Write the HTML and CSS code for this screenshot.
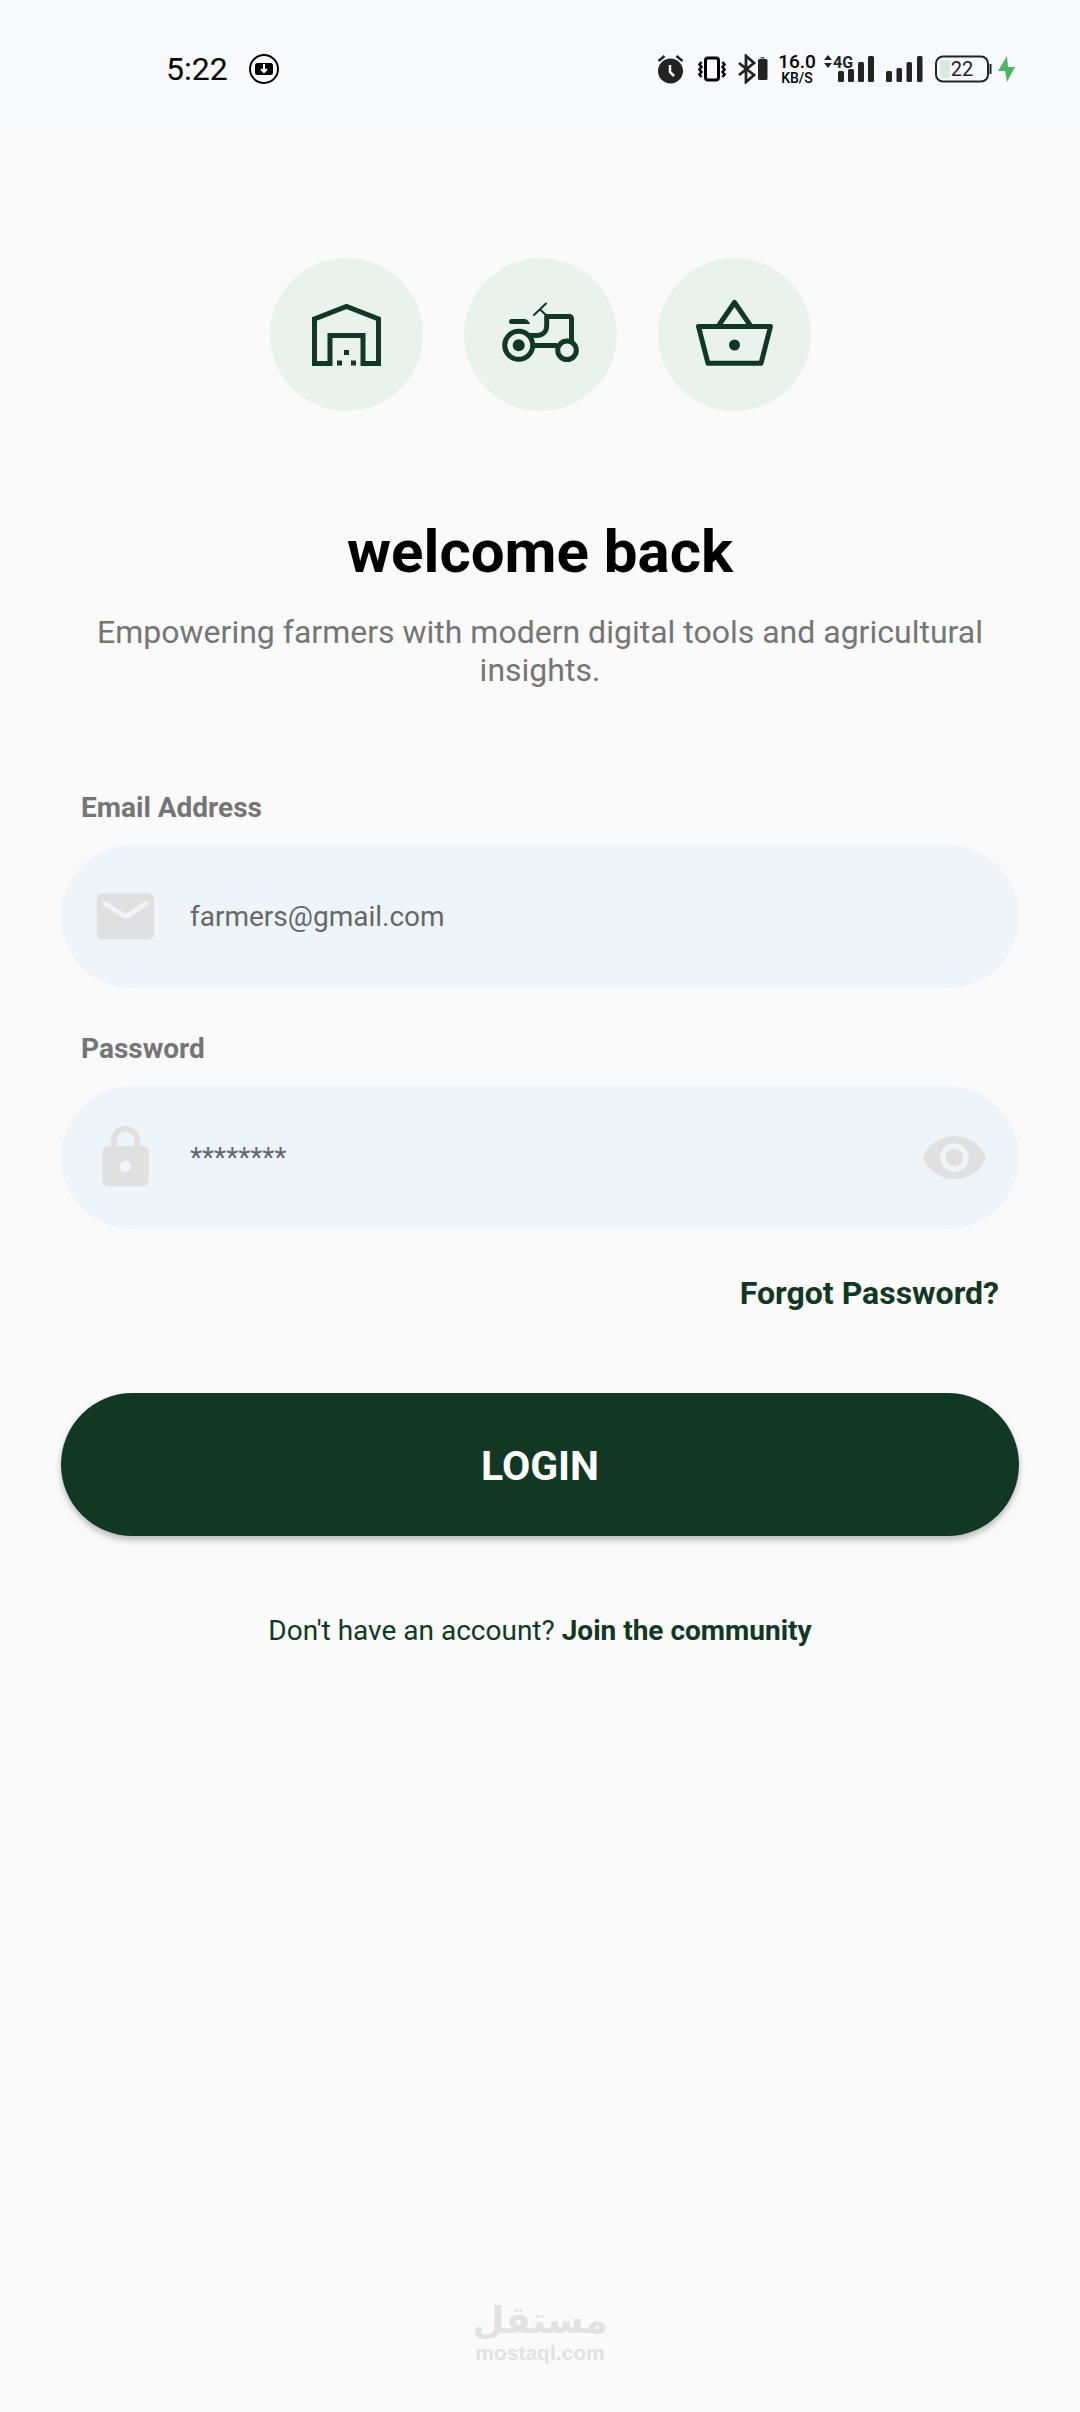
FILE: index.html
```html
<!DOCTYPE html>
<html lang="en">

<head>
  <title>Login</title>
  <meta charset="utf-8" />
  <meta name="viewport" content="width=device-width" />
  <link rel="stylesheet" href="styles.css">
</head>

<body>
  <!-- phone status bar -->
  <header class="status">
    <div class="status-left">
      <span class="clock">5:22</span>
      <svg width="30" height="30" viewBox="0 0 30 30">
        <circle cx="15" cy="15" r="14" fill="none" stroke="#000" stroke-width="2" />
        <rect x="6" y="9" width="18" height="12" rx="2.500" />
        <path d="M15 10v7M12 15l3 3 3-3" fill="none" stroke="#fff" stroke-width="2" />
      </svg>
    </div>
    <div class="status-right">
      <!-- alarm -->
      <svg width="27" height="30" viewBox="0 0 27 30" fill="#232323">
        <circle cx="13.500" cy="17" r="12.500" />
        <path d="M1.500 7l6-5M25.500 7l-6-5" stroke="#232323" stroke-width="2.500" />
        <path d="M13 11v7l4 4" fill="none" stroke="#f8f9fc" stroke-width="2.500" />
      </svg>
      <!-- vibrate -->
      <svg class="vibrate" width="28" height="30" viewBox="0 0 28 30" fill="none" stroke="#000">
        <rect x="7.500" y="4" width="13" height="22" rx="2.500" stroke-width="3" />
        <path d="M3.500 8l-2 2.500 2 2.500-2 2.500 2 2.500-2 2.500 2 2.500M24.500 8l2 2.500-2 2.500 2 2.500-2 2.500 2 2.500-2 2.500" stroke-width="2.500" />
      </svg>
      <!-- bluetooth -->
      <svg class="bluetooth" width="30" height="30" viewBox="0 0 30 30">
        <path d="M1 9l15 12-8 7V2l8 7L1 21" fill="none" stroke="#232323" stroke-width="2.800" />
        <path d="M22.500 3h4v1.500h-4z" fill="#555" />
        <rect x="20" y="5" width="9.500" height="21" rx="1.500" fill="#232323" />
      </svg>
      <div class="speed"><b>16.0</b><span>KB/S</span></div>
      <!-- sim 1 -->
      <svg class="sim" width="51" height="36" viewBox="0 -3 51 36" fill="#232323">
        <path d="M1 6l4-5 4 5zM1 9h8l-4 5z" />
        <text class="net" x="10" y="14">4G</text>
        <rect x="15" y="17" width="6" height="11" rx="1.500" />
        <rect x="25" y="15" width="6" height="13" rx="1.500" />
        <rect x="35" y="8" width="6" height="20" rx="1.500" />
        <rect x="45" y="2" width="6" height="26" rx="1.500" />
      </svg>
      <!-- sim 2 -->
      <svg class="bars" width="37" height="30" viewBox="0 0 37 30" fill="#232323">
        <rect x="0" y="17" width="6" height="11" rx="1.500" />
        <rect x="10.500" y="14" width="5.500" height="14" rx="1.500" />
        <rect x="20.500" y="8" width="5.500" height="20" rx="1.500" />
        <rect x="31" y="2" width="5.500" height="26" rx="1.500" />
      </svg>
      <svg class="battery" width="57" height="30" viewBox="0 0 57 30">
        <rect x="1" y="2.500" width="52" height="25" rx="7" fill="none" stroke="#232323" stroke-width="2" />
        <path d="M8 6h7v18H8a3 3 0 0 1-3-3V9a3 3 0 0 1 3-3z" fill="#d8e9dd" />
        <path d="M55.500 10v10" stroke="#232323" stroke-width="2" />
        <text class="level" x="27" y="22">22</text>
      </svg>
      <svg width="17" height="30" viewBox="0 0 17 30">
        <path d="M9 2L0 17h7l2 11 8-15h-7z" fill="#4db566" />
      </svg>
    </div>
  </header>

  <main class="content">
    <div class="badges">
      <svg class="badge" viewBox="0 0 153 153">
        <path d="M44.500 105.500V61l32-12.500 32 12.500v44.500H93v-28H60v28z" />
        <path class="solid" d="M74 92h5v5h-5zM67 102.500h5v5h-5zM81 102.500h5v5h-5z" />
      </svg>
      <svg class="badge" viewBox="0 0 153 153">
        <circle cx="54.700" cy="87.300" r="14" />
        <circle class="solid" cx="54.700" cy="87.300" r="6" />
        <circle cx="103" cy="92.300" r="9.300" />
        <path d="M107.500 83V60.500a2 2 0 0 0-2-2H82.700v9c0 6-4 10-10 10H66M69 87.500h24" />
        <path class="solid" d="M47.500 61H60c3 0 5 2 6 5H47.500a2.500 2.500 0 0 1 0-5z" />
        <path class="thin" d="M70 57l12-11.500M76 51.500l7 6.500" />
      </svg>
      <svg class="badge" viewBox="0 0 153 153">
        <path d="M40.500 68.500h72L103 105.300H50zM61 67l15.500-22.500L92 67" />
        <circle class="solid" cx="76.500" cy="87" r="5.500" />
      </svg>
    </div>

    <h1 class="title">welcome back</h1>
    <p class="subtitle">Empowering farmers with modern digital tools and agricultural insights.</p>

    <form class="form">
      <label class="label" for="email">Email Address</label>
      <div class="field">
        <svg class="icon" viewBox="0 0 24 24">
          <path d="M20 4H4c-1.100 0-2 .9-2 2v12c0 1.100.9 2 2 2h16c1.100 0 2-.9 2-2V6c0-1.100-.9-2-2-2zm-.4 4.250l-7.070 4.420c-.32.2-.74.2-1.060 0L4.400 8.250c-.25-.16-.4-.43-.4-.72 0-.67.73-1.070 1.300-.72L12 11l6.700-4.190c.57-.35 1.300.05 1.300.72 0 .29-.15.56-.4.72z" />
        </svg>
        <input class="input" type="email" id="email" placeholder="farmers@gmail.com">
      </div>

      <label class="label" for="password">Password</label>
      <div class="field">
        <svg class="icon" viewBox="0 0 24 24">
          <path d="M18 8h-1V6c0-2.760-2.240-5-5-5S7 3.240 7 6v2H6c-1.100 0-2 .9-2 2v10c0 1.100.9 2 2 2h12c1.100 0 2-.9 2-2V10c0-1.100-.9-2-2-2zm-6 9c-1.100 0-2-.9-2-2s.9-2 2-2 2 .9 2 2-.9 2-2 2zM9 8V6c0-1.660 1.340-3 3-3s3 1.340 3 3v2H9z" />
        </svg>
        <input class="input" type="password" id="password" placeholder="********">
        <button class="eye" type="button" aria-label="Show password">
          <svg class="icon" viewBox="0 0 24 24">
            <path d="M12 4.500C7 4.500 2.730 7.610 1 12c1.730 4.390 6 7.500 11 7.500s9.270-3.110 11-7.500c-1.730-4.390-6-7.500-11-7.500zM12 17c-2.760 0-5-2.240-5-5s2.240-5 5-5 5 2.240 5 5-2.240 5-5 5zm0-8c-1.660 0-3 1.340-3 3s1.340 3 3 3 3-1.340 3-3-1.340-3-3-3z" />
          </svg>
        </button>
      </div>

      <a class="forgot" href="#">Forgot Password?</a>
      <button class="login" type="submit">LOGIN</button>
    </form>

    <p class="join">Don't have an account? <a href="#">Join the community</a></p>
  </main>

  <footer class="brand">
    <span class="brand-ar" lang="ar" dir="rtl">مستقل</span>
    <span class="brand-en">mostaql.com</span>
  </footer>
</body>

</html>
```
FILE: styles.css
```css
* {
  margin: 0;
  padding: 0;
  box-sizing: border-box;
}

body {
  display: flex;
  flex-direction: column;
  min-height: 100vh;
  background: #fafafa;
  color: #123825;
  font-family: Roboto, sans-serif;
}

svg {
  display: block;
  flex: none;
}

a {
  color: inherit;
  font-weight: 700;
  text-decoration: none;
}

/* status bar */

.status {
  display: flex;
  justify-content: space-between;
  align-items: center;
  height: 120px;
  padding: 18px 65px 0 166px;
  margin-bottom: 138px;
  background: #f8f9fc;
  color: #000;
}

.status-left,
.status-right {
  display: flex;
  align-items: center;
}

.status-left {
  gap: 21px;
}

.clock {
  font-size: 32px;
  line-height: 32px;
}

.vibrate {
  margin-left: 14px;
}

.bluetooth {
  margin-left: 12px;
}

.speed {
  display: flex;
  flex-direction: column;
  align-items: center;
  width: 38px;
  margin: 0 7px 0 10px;
  font-size: 14px;
  font-weight: 500;
  line-height: 14px;
}

.speed b {
  font-size: 19px;
  font-weight: 500;
  line-height: 18px;
}

.net {
  font-size: 16px;
  font-weight: 700;
}

.level {
  font-size: 20px;
  text-anchor: middle;
  fill: #232323;
}

.bars {
  margin: 0 12px;
}

.battery {
  margin-right: 6px;
}

/* login page */

.content {
  padding: 0 61px;
}

.badges {
  display: flex;
  justify-content: center;
  gap: 41px;
  margin-bottom: 106px;
}

.badge {
  width: 153px;
  height: 153px;
  border-radius: 50%;
  background: #e9f2ed;
  fill: none;
  stroke: #123825;
  stroke-width: 5;
  stroke-linejoin: round;
}

.badge:first-child {
  stroke-linejoin: miter;
}

.badge .solid {
  fill: #123825;
  stroke: none;
}

.badge .thin {
  stroke-width: 2;
  stroke-linecap: round;
}

.title {
  margin-bottom: 26px;
  color: #000;
  font-size: 60px;
  line-height: 70px;
  text-align: center;
}

.subtitle {
  margin-bottom: 103px;
  color: #757575;
  font-size: 32px;
  line-height: 38px;
  text-align: center;
}

.form {
  display: flex;
  flex-direction: column;
}

.label {
  margin: 0 20px 21px;
  color: #757575;
  font-size: 28px;
  font-weight: 700;
  line-height: 32px;
}

.field {
  display: flex;
  align-items: center;
  height: 143px;
  margin-bottom: 45px;
  padding: 0 30px;
  border-radius: 72px;
  background: #eff4f9;
}

.icon {
  width: 69px;
  height: 69px;
  fill: #e0e0e0;
}

.input {
  flex: 1;
  min-width: 0;
  height: 100%;
  margin-left: 30px;
  border: 0;
  outline: 0;
  background: none;
  color: #333;
  font: 28px Roboto, sans-serif;
}

.input::placeholder {
  color: #64686b;
}

.eye {
  border: 0;
  background: none;
}

.forgot {
  align-self: flex-end;
  margin: 0 20px 81px;
  font-size: 32px;
  line-height: 38px;
}

.login {
  height: 143px;
  padding-top: 3px;
  border: 0;
  border-radius: 72px;
  background: #123825;
  box-shadow: 0 4px 6px rgba(0, 0, 0, 0.25);
  color: #fff;
  font: 700 41px Roboto, sans-serif;
}

.join {
  margin-top: 79px;
  font-size: 28px;
  line-height: 32px;
  text-align: center;
}

/* footer mark */

.brand {
  display: flex;
  flex-direction: column;
  align-items: center;
  margin-top: auto;
  padding-bottom: 47px;
  color: #e2e2e2;
  font-weight: 700;
}

.brand-ar {
  font-family: "DejaVu Sans", sans-serif;
  font-size: 37px;
  line-height: 40px;
}

.brand-en {
  font-family: "Liberation Sans", sans-serif;
  font-size: 21px;
  line-height: 24px;
}
```
